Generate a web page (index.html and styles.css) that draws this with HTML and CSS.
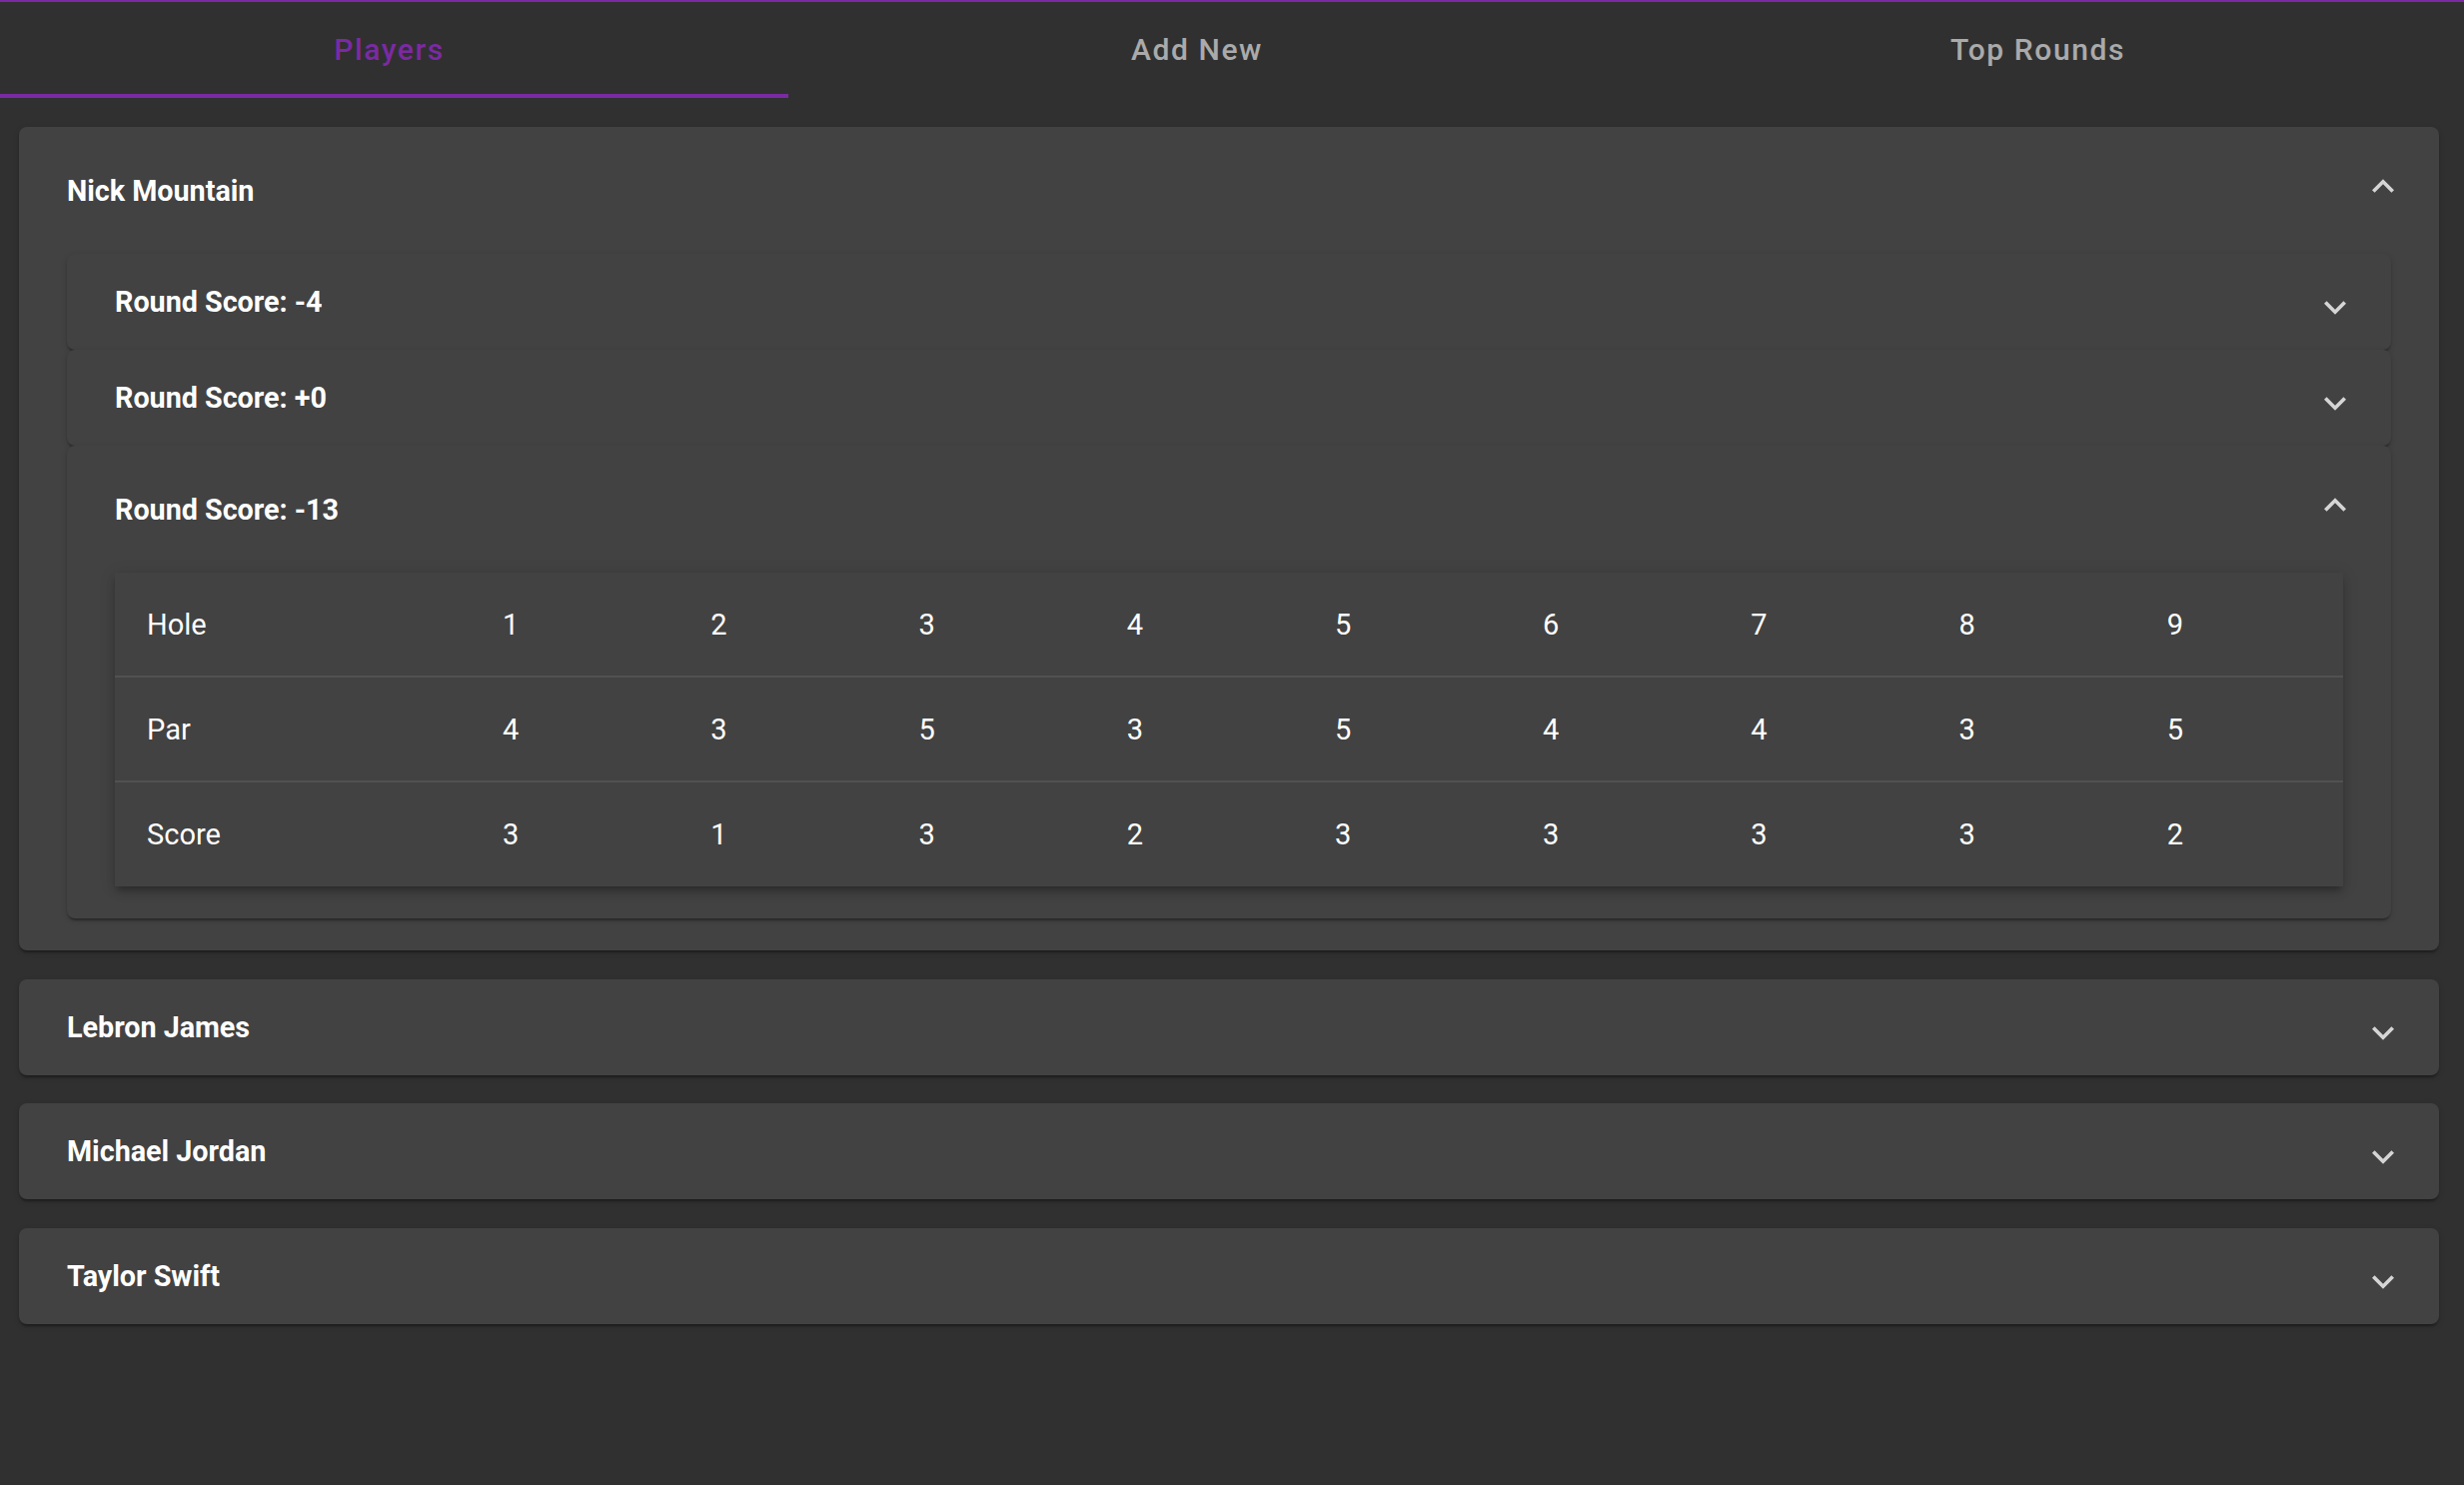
FILE: index.html
```html
<!DOCTYPE html>
<html lang="en">
<head>
<meta charset="utf-8">
<title>Players</title>
<link rel="stylesheet" href="styles.css">
</head>
<body>
<div class="topline"></div>
<nav class="tabs">
  <div class="tab active first">Players</div>
  <div class="tab">Add New</div>
  <div class="tab last">Top Rounds</div>
</nav>
<main class="list">
  <section class="card">
    <div class="summary expanded">
      <span class="title">Nick Mountain</span>
      <svg class="chev" viewBox="0 2.45 24 24"><path d="M7.41 15.41 12 10.83l4.59 4.58L18 14l-6-6-6 6z"/></svg>
    </div>
    <div class="details">
      <div class="round">
        <div class="summary">
          <span class="title">Round Score: -4</span>
          <svg class="chev" viewBox="0 -3 24 24"><path d="M16.59 8.59 12 13.17 7.41 8.59 6 10l6 6 6-6z"/></svg>
        </div>
      </div>
      <div class="round">
        <div class="summary">
          <span class="title">Round Score: +0</span>
          <svg class="chev" viewBox="0 -3 24 24"><path d="M16.59 8.59 12 13.17 7.41 8.59 6 10l6 6 6-6z"/></svg>
        </div>
      </div>
      <div class="round">
        <div class="summary expanded">
          <span class="title">Round Score: -13</span>
          <svg class="chev" viewBox="0 2.45 24 24"><path d="M7.41 15.41 12 10.83l4.59 4.58L18 14l-6-6-6 6z"/></svg>
        </div>
        <div class="details">
          <div class="scorecard">
            <div class="row">
              <span class="cell label">Hole</span>
              <span class="cell">1</span><span class="cell">2</span><span class="cell">3</span>
              <span class="cell">4</span><span class="cell">5</span><span class="cell">6</span>
              <span class="cell">7</span><span class="cell">8</span><span class="cell">9</span>
            </div>
            <div class="row">
              <span class="cell label">Par</span>
              <span class="cell">4</span><span class="cell">3</span><span class="cell">5</span>
              <span class="cell">3</span><span class="cell">5</span><span class="cell">4</span>
              <span class="cell">4</span><span class="cell">3</span><span class="cell">5</span>
            </div>
            <div class="row">
              <span class="cell label">Score</span>
              <span class="cell">3</span><span class="cell">1</span><span class="cell">3</span>
              <span class="cell">2</span><span class="cell">3</span><span class="cell">3</span>
              <span class="cell">3</span><span class="cell">3</span><span class="cell">2</span>
            </div>
          </div>
        </div>
      </div>
    </div>
  </section>
  <section class="card">
    <div class="summary">
      <span class="title">Lebron James</span>
      <svg class="chev" viewBox="0 -3 24 24"><path d="M16.59 8.59 12 13.17 7.41 8.59 6 10l6 6 6-6z"/></svg>
    </div>
  </section>
  <section class="card">
    <div class="summary">
      <span class="title">Michael Jordan</span>
      <svg class="chev" viewBox="0 -3 24 24"><path d="M16.59 8.59 12 13.17 7.41 8.59 6 10l6 6 6-6z"/></svg>
    </div>
  </section>
  <section class="card">
    <div class="summary">
      <span class="title">Taylor Swift</span>
      <svg class="chev" viewBox="0 -3 24 24"><path d="M16.59 8.59 12 13.17 7.41 8.59 6 10l6 6 6-6z"/></svg>
    </div>
  </section>
</main>
</body>
</html>
```
FILE: styles.css
```css
* { box-sizing: border-box; }

html, body {
  margin: 0;
  padding: 0;
  background: #303030;
  color: #ffffff;
  font-family: Roboto, "Liberation Sans", Arial, sans-serif;
}

.topline {
  height: 2px;
  background: #7b2aa3;
}

.tabs {
  display: grid;
  grid-template-columns: 789fr 818fr 859fr;
  height: 96px;
}

.tab {
  display: flex;
  align-items: center;
  justify-content: center;
  padding-top: 2px;
  font-size: 30px;
  font-weight: 500;
  letter-spacing: 1.6px;
  color: rgba(255, 255, 255, 0.6);
  border-bottom: 4px solid transparent;
}

.tab.first {
  padding-right: 10px;
}

.tab.last {
  padding-left: 6px;
}

.tab.active {
  color: #7b2aa3;
  border-bottom-color: #7b2aa3;
}

.list {
  display: flex;
  flex-direction: column;
  gap: 28.5px;
  padding: 29px 25px 40px 19px;
}

.card {
  background: #424242;
  border-radius: 8px;
  box-shadow: 0 4px 2px -2px rgba(0, 0, 0, 0.2), 0 2px 2px 0 rgba(0, 0, 0, 0.14), 0 2px 6px 0 rgba(0, 0, 0, 0.12);
}

.summary {
  display: flex;
  align-items: center;
  justify-content: space-between;
  height: 96px;
  padding: 0 34px 0 48px;
}

.summary.expanded {
  height: 127px;
}

.title {
  font-size: 28.7px;
  font-weight: 700;
  color: #ffffff;
}

.chev {
  width: 44px;
  height: 44px;
  flex: none;
  fill: rgba(255, 255, 255, 0.78);
}

.details {
  padding: 0 48px 32px;
}

.round {
  background: #424242;
  border-radius: 8px;
  box-shadow: 0 4px 2px -2px rgba(0, 0, 0, 0.2), 0 2px 2px 0 rgba(0, 0, 0, 0.14), 0 2px 6px 0 rgba(0, 0, 0, 0.12);
}

.scorecard {
  background: #424242;
  box-shadow: 0 6px 6px -4px rgba(0, 0, 0, 0.2), 0 6px 8px 0 rgba(0, 0, 0, 0.14), 0 2px 16px 0 rgba(0, 0, 0, 0.12);
}

.row {
  display: grid;
  grid-template-columns: 356px repeat(9, 1fr);
  height: 105px;
  border-bottom: 2px solid #515151;
}

.row:last-child {
  height: 104px;
  border-bottom: none;
}

.cell {
  display: flex;
  align-items: center;
  padding-left: 32px;
  font-size: 29px;
  font-weight: 400;
  color: #ffffff;
}
```
